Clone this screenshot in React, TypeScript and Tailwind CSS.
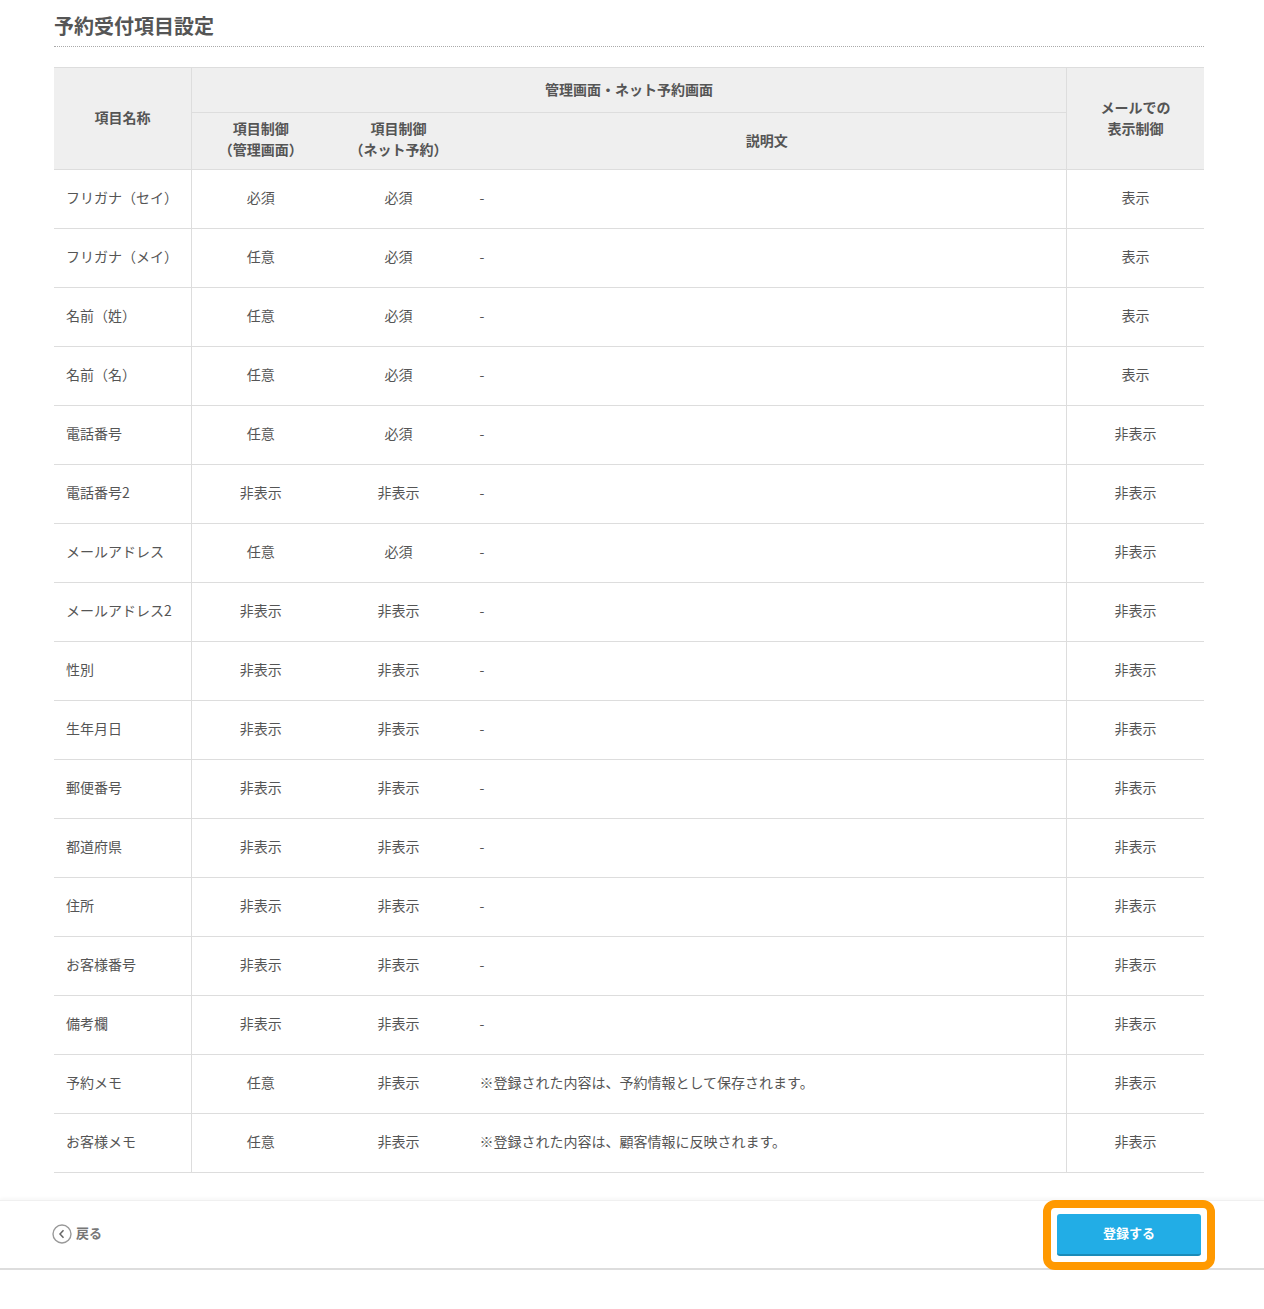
const rows: [string, string, string, string, string][] = [
  ["フリガナ（セイ）", "必須", "必須", "-", "表示"],
  ["フリガナ（メイ）", "任意", "必須", "-", "表示"],
  ["名前（姓）", "任意", "必須", "-", "表示"],
  ["名前（名）", "任意", "必須", "-", "表示"],
  ["電話番号", "任意", "必須", "-", "非表示"],
  ["電話番号2", "非表示", "非表示", "-", "非表示"],
  ["メールアドレス", "任意", "必須", "-", "非表示"],
  ["メールアドレス2", "非表示", "非表示", "-", "非表示"],
  ["性別", "非表示", "非表示", "-", "非表示"],
  ["生年月日", "非表示", "非表示", "-", "非表示"],
  ["郵便番号", "非表示", "非表示", "-", "非表示"],
  ["都道府県", "非表示", "非表示", "-", "非表示"],
  ["住所", "非表示", "非表示", "-", "非表示"],
  ["お客様番号", "非表示", "非表示", "-", "非表示"],
  ["備考欄", "非表示", "非表示", "-", "非表示"],
  ["予約メモ", "任意", "非表示", "※登録された内容は、予約情報として保存されます。", "非表示"],
  ["お客様メモ", "任意", "非表示", "※登録された内容は、顧客情報に反映されます。", "非表示"],
];

const th = "border border-[#dddddd] bg-[#efefef] font-bold text-[#555555] text-center align-middle leading-[21px]";

export default function App() {
  return (
    <div className="min-h-[1309px] bg-white text-[14px] text-[#555555] font-['Noto_Sans_CJK_JP','Liberation_Sans',sans-serif]">
      <div className="px-[54px] w-[1258px]">
        <h2 className="h-[47px] pt-[11px] text-[20px] leading-[30px] font-bold text-[#555555] border-b border-dotted border-[#aaaaaa]">
          予約受付項目設定
        </h2>
        <table className="mt-[20px] w-[1150px] table-fixed border-collapse">
          <colgroup>
            <col className="w-[137.5px]" />
            <col className="w-[138px]" />
            <col className="w-[138px]" />
            <col className="w-[599px]" />
            <col className="w-[137.5px]" />
          </colgroup>
          <thead>
            <tr className="h-[45px]">
              <th rowSpan={2} className={`${th} border-l-0 pb-[3px]`}>項目名称</th>
              <th colSpan={3} className={`${th} pb-[2px]`}>管理画面・ネット予約画面</th>
              <th rowSpan={2} className={`${th} border-r-0 pb-[2px]`}>メールでの<br />表示制御</th>
            </tr>
            <tr className="h-[57px]">
              <th className={`${th} border-r-0 pb-[4px]`}>項目制御<br />（管理画面）</th>
              <th className={`${th} border-x-0 pb-[4px]`}>項目制御<br />（ネット予約）</th>
              <th className={`${th} border-l-0 pb-[2px]`}>説明文</th>
            </tr>
          </thead>
          <tbody>
            {rows.map((r) => (
              <tr key={r[0]} className="h-[59px] border-b border-[#dddddd]">
                <td className="pl-[12px] pb-[4px] border-r border-[#dddddd]">{r[0]}</td>
                <td className="text-center pb-[4px]">{r[1]}</td>
                <td className="text-center pb-[4px]">{r[2]}</td>
                <td className="pl-[12px] pb-[4px]">{r[3]}</td>
                <td className="text-center pb-[4px] border-l border-[#dddddd]">{r[4]}</td>
              </tr>
            ))}
          </tbody>
        </table>
      </div>

      <div className="mt-[27px] h-[70px] border-t border-[#f0f0f0] border-b-2 border-b-[#dddddd] shadow-[0_-2px_3px_rgba(0,0,0,0.03)] flex items-center justify-between pl-[52px] pr-[63px]">
        <a className="flex items-center gap-[4px] text-[13px] font-bold text-[#777777]">
          <svg width="20" height="20" viewBox="0 0 20 20" fill="none" className="-mt-[1px]">
            <circle cx="10" cy="10" r="9" stroke="#999999" strokeWidth="1.4" />
            <path d="M11.5 6.2 L8 10 L11.5 13.8" stroke="#666666" strokeWidth="1.5" />
          </svg>
          <span className="-mt-[4px]">戻る</span>
        </a>
        <div className="relative">
          <button className="w-[144px] h-[42px] pb-[2px] rounded-[3px] bg-[#22ade6] border-b-2 border-[#1b8bb8] text-white text-[13px] font-bold">
            登録する
          </button>
          <div className="absolute -left-[14px] -top-[14px] w-[172px] h-[70px] rounded-[12px] border-[8px] border-[#ff9900]" />
        </div>
      </div>
    </div>
  );
}
